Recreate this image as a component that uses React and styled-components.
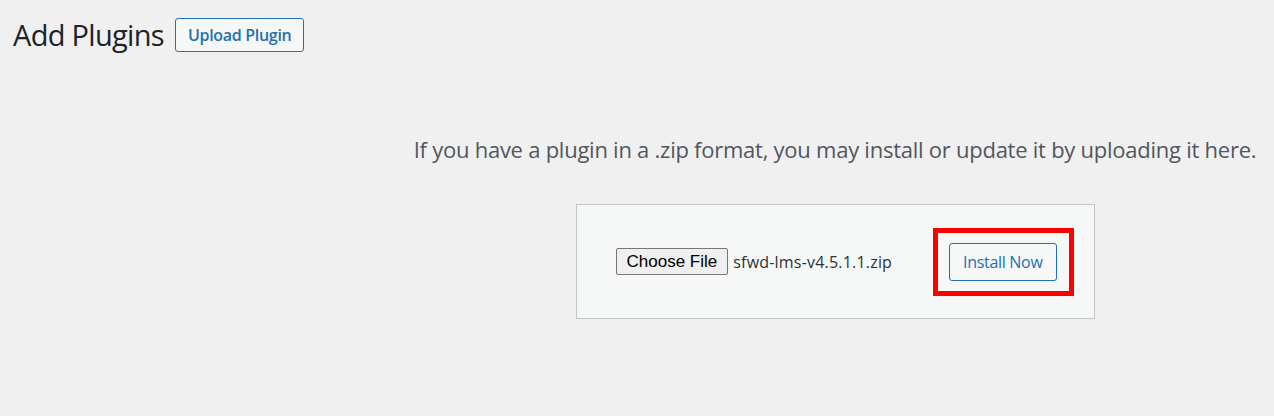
import React from "react";
import styled, { createGlobalStyle } from "styled-components";

const GlobalStyle = createGlobalStyle`
  html, body {
    margin: 0;
    padding: 0;
    background: #f0f0f1;
    overflow: hidden;
  }
  body {
    font-family: "Open Sans", "Noto Sans", sans-serif;
    color: #3c434a;
  }
`;

const Page = styled.div`
  padding: 16px 0 0 12px;
  box-sizing: border-box;
  min-height: 416px;
`;

const Header = styled.div`
  display: flex;
  align-items: center;
  gap: 11px;
`;

const Title = styled.h1`
  margin: 0;
  font-size: 29px;
  font-weight: 400;
  line-height: 38px;
  letter-spacing: -0.7px;
  color: #1d2327;
  padding-left: 1px;
`;

const OutlineButton = styled.button`
  display: inline-flex;
  align-items: center;
  justify-content: center;
  box-sizing: border-box;
  height: ${(p) => p.$height}px;
  padding: 0 ${(p) => p.$padX}px;
  background: #f6f7f7;
  border: 1px solid #2271b1;
  border-radius: 3px;
  color: #2271b1;
  font-family: "Open Sans", "Noto Sans", sans-serif;
  font-size: 16px;
  font-weight: ${(p) => p.$weight};
  letter-spacing: -0.3px;
  cursor: pointer;
  white-space: nowrap;
`;

const UploadSection = styled.div`
  margin-left: 384px;
  width: 878px;
  display: flex;
  flex-direction: column;
  align-items: center;
  padding-top: 78px;
`;

const Help = styled.p`
  margin: 0;
  font-size: 22px;
  line-height: 34px;
  letter-spacing: -0.25px;
  color: #50575e;
  white-space: nowrap;
`;

const UploadForm = styled.form`
  margin-top: 38px;
  box-sizing: border-box;
  width: 519px;
  height: 115px;
  display: flex;
  align-items: center;
  justify-content: space-between;
  padding: 0 37px 0 39px;
  background: #f6f7f7;
  border: 1px solid #c3c4c7;
`;

const FilePicker = styled.div`
  display: flex;
  align-items: center;
  gap: 5px;
`;

const NativeButton = styled.button`
  box-sizing: border-box;
  height: 27px;
  padding: 0 10px;
  background: #efefef;
  border: 1px solid #767676;
  border-radius: 2px;
  font-family: "Liberation Sans", Arial, sans-serif;
  font-size: 17px;
  color: #000;
  cursor: pointer;
`;

const FileName = styled.span`
  font-size: 16px;
  letter-spacing: 0.2px;
  color: #2c3338;
`;

const Highlight = styled.div`
  position: relative;
  display: inline-flex;
`;

const RedFrame = styled.div`
  position: absolute;
  top: -15px;
  bottom: -15px;
  left: -16px;
  right: -17px;
  border: 5px solid #ff0000;
  pointer-events: none;
`;

export default function App() {
  return (
    <>
      <GlobalStyle />
      <Page>
        <Header>
          <Title>Add Plugins</Title>
          <OutlineButton type="button" $height={34} $padX={12} $weight={600}>
            Upload Plugin
          </OutlineButton>
        </Header>
        <UploadSection>
          <Help>
            If you have a plugin in a .zip format, you may install or update it by uploading it here.
          </Help>
          <UploadForm onSubmit={(e) => e.preventDefault()}>
            <FilePicker>
              <NativeButton type="button">Choose File</NativeButton>
              <FileName>sfwd-lms-v4.5.1.1.zip</FileName>
            </FilePicker>
            <Highlight>
              <OutlineButton type="submit" $height={38} $padX={13} $weight={400}>
                Install Now
              </OutlineButton>
              <RedFrame />
            </Highlight>
          </UploadForm>
        </UploadSection>
      </Page>
    </>
  );
}
